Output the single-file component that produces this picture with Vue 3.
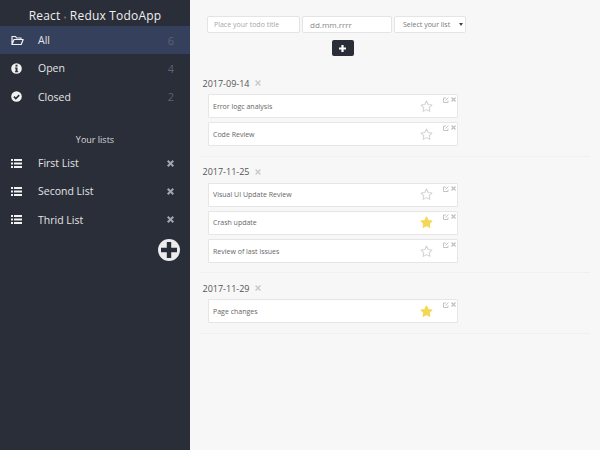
<template>
  <div class="app">
    <aside class="sidebar">
      <h1 class="brand">React <span class="heart">♦</span> Redux TodoApp</h1>
      <ul class="nav">
        <li v-for="item in filters" :key="item.name" :class="['nav-row', { active: item.active }]">
          <span class="nav-icon">
            <svg v-if="item.icon === 'folder'" width="13" height="11" viewBox="0 0 13 11" fill="none" stroke="currentColor" stroke-width="1.2"><path d="M1 9.5V1.5h3.5l1 1.5h4.5v1.5M1 9.5l2-5h9.2l-2 5z" stroke-linejoin="round" /></svg>
            <svg v-else-if="item.icon === 'info'" width="11" height="11" viewBox="0 0 11 11"><circle cx="5.5" cy="5.5" r="5.3" fill="currentColor" /><rect x="4.5" y="1.7" width="2" height="1.9" fill="#2a2e39" /><path d="M3.9 4.4h2.6v3.8h.8v1H3.9v-1h.7V5.4h-.7z" fill="#2a2e39" /></svg>
            <svg v-else width="11" height="11" viewBox="0 0 11 11"><circle cx="5.5" cy="5.5" r="5.3" fill="currentColor" /><path d="M2.9 5.6l1.9 1.9 3.4-3.4" fill="none" stroke="#2a2e39" stroke-width="1.6" /></svg>
          </span>
          <span class="nav-label">{{ item.name }}</span>
          <span class="nav-count">{{ item.count }}</span>
        </li>
      </ul>
      <h2 class="lists-title">Your lists</h2>
      <ul class="nav">
        <li v-for="list in lists" :key="list" class="nav-row">
          <span class="nav-icon">
            <svg width="11" height="9" viewBox="0 0 11 9" fill="currentColor"><rect y="0" width="2" height="2" /><rect y="3.5" width="2" height="2" /><rect y="7" width="2" height="2" /><rect x="3" y="0" width="8" height="2" /><rect x="3" y="3.5" width="8" height="2" /><rect x="3" y="7" width="8" height="2" /></svg>
          </span>
          <span class="nav-label">{{ list }}</span>
          <svg class="list-remove" width="7" height="7" viewBox="0 0 7 7" stroke="currentColor" stroke-width="2"><path d="M.7.7l5.6 5.6M6.3.7L.7 6.3" /></svg>
        </li>
      </ul>
      <div class="add-list">
        <button class="add-list-btn">
          <svg width="16" height="16" viewBox="0 0 16 16" fill="#2a2e39"><path d="M5.8 0h4.4v5.8H16v4.4h-5.8V16H5.8v-5.8H0V5.8h5.8z" /></svg>
        </button>
      </div>
    </aside>

    <main class="content">
      <form class="todo-form" @submit.prevent>
        <div class="form-fields">
          <div class="field title-field">Place your todo title</div>
          <div class="field date-field">dd.mm.rrrr</div>
          <div class="field list-field">Select your list <span class="caret"></span></div>
        </div>
        <button class="add-todo">
          <svg width="7" height="7" viewBox="0 0 7 7" fill="#fff"><path d="M2.4 0h2.2v2.4H7v2.2H4.6V7H2.4V4.6H0V2.4h2.4z" /></svg>
        </button>
      </form>

      <section v-for="group in groups" :key="group.date" class="group">
        <h3 class="group-date">{{ group.date }}
          <svg width="6" height="6" viewBox="0 0 7 7" stroke="#c8c8c8" stroke-width="1.6"><path d="M.7.7l5.6 5.6M6.3.7L.7 6.3" /></svg>
        </h3>
        <div v-for="todo in group.todos" :key="todo.title" class="todo">
          <span class="todo-title">{{ todo.title }}</span>
          <svg class="star" width="13" height="13" viewBox="0 0 24 24" :fill="todo.starred ? '#f5d757' : 'none'" :stroke="todo.starred ? '#f5d757' : '#d4d4d4'" stroke-width="2" stroke-linejoin="round"><polygon points="12 2 15.09 8.26 22 9.27 17 14.14 18.18 21.02 12 17.77 5.82 21.02 7 14.14 2 9.27 8.91 8.26" /></svg>
          <div class="todo-tools">
            <svg width="6" height="6" viewBox="0 0 6 6" fill="none" stroke="#c4c4c4"><path d="M5 3.5v2H.5V1H3M2.5 3.5l3-3" /></svg>
            <svg width="5" height="5" viewBox="0 0 7 7" stroke="#bdbdbd" stroke-width="1.6"><path d="M.7.7l5.6 5.6M6.3.7L.7 6.3" /></svg>
          </div>
        </div>
      </section>
    </main>
  </div>
</template>

<script setup>
const filters = [
  { name: 'All', count: 6, icon: 'folder', active: true },
  { name: 'Open', count: 4, icon: 'info' },
  { name: 'Closed', count: 2, icon: 'check' }
]

const lists = ['First List', 'Second List', 'Thrid List']

const groups = [
  {
    date: '2017-09-14',
    todos: [
      { title: 'Error logc analysis' },
      { title: 'Code Review' }
    ]
  },
  {
    date: '2017-11-25',
    todos: [
      { title: 'Visual UI Update Review' },
      { title: 'Crash update', starred: true },
      { title: 'Review of last issues' }
    ]
  },
  {
    date: '2017-11-29',
    todos: [{ title: 'Page changes', starred: true }]
  }
]
</script>

<style>
body {
  margin: 0;
}
</style>

<style scoped>
.app {
  display: flex;
  width: 600px;
  height: 450px;
  overflow: hidden;
  font-family: "Open Sans", "Liberation Sans", sans-serif;
  background: #f7f7f7;
}

.sidebar {
  width: 190px;
  flex-shrink: 0;
  background: #2a2e39;
  color: #e8e8e8;
}

.brand {
  margin: 0;
  height: 26px;
  line-height: 31px;
  font-size: 12px;
  font-weight: 400;
  text-align: center;
  color: #f0f0f0;
  letter-spacing: .2px;
}

.heart {
  font-size: 5px;
  color: #777;
  vertical-align: 1px;
}

.nav {
  list-style: none;
  margin: 0;
  padding: 0;
}

.nav-row {
  display: flex;
  align-items: center;
  height: 28.3px;
  padding: 0 16px 0 11px;
  font-size: 10.5px;
  color: #e4e4e4;
}

.nav-row.active {
  background: #34405c;
}

.nav-icon {
  display: flex;
  width: 27px;
  flex-shrink: 0;
  color: #f2f2f2;
}

.nav-label {
  flex: 1;
}

.nav-count {
  color: #5d6270;
  font-size: 11px;
}

.lists-title {
  margin: 21px 0 2px;
  height: 15px;
  line-height: 15px;
  font-size: 9px;
  font-weight: 400;
  text-align: center;
  color: #d8d8d8;
}

.list-remove {
  color: #a3a5ab;
}

.add-list {
  display: flex;
  justify-content: flex-end;
  padding: 5px 10px 0 0;
}

.add-list-btn {
  display: flex;
  align-items: center;
  justify-content: center;
  width: 22px;
  height: 22px;
  padding: 0;
  border: 0;
  border-radius: 50%;
  background: #ececec;
}

.content {
  flex: 1;
  padding: 16px 10px 0;
}

.todo-form {
  display: flex;
  flex-direction: column;
  align-items: center;
  width: 271px;
  margin: 0 0 20px 7px;
}

.form-fields {
  display: flex;
  gap: 2px;
  width: 100%;
}

.field {
  box-sizing: border-box;
  height: 17px;
  line-height: 15px;
  background: #fff;
  border: 1px solid #e4e4e4;
  border-radius: 2px;
  font-size: 7px;
  color: #a8a8a8;
  white-space: nowrap;
}

.title-field {
  width: 93px;
  padding-left: 6px;
}

.date-field {
  width: 90px;
  padding-left: 7px;
  font-size: 8px;
  color: #888;
}

.list-field {
  position: relative;
  width: 72px;
  padding-left: 8px;
  color: #777;
}

.caret {
  position: absolute;
  right: 2px;
  top: 6px;
  border-left: 2px solid transparent;
  border-right: 2px solid transparent;
  border-top: 3px solid #444;
}

.add-todo {
  display: flex;
  align-items: center;
  justify-content: center;
  width: 22px;
  height: 16px;
  margin-top: 7px;
  padding: 0;
  border: 0;
  border-radius: 2px;
  background: #2a2e39;
}

.group {
  padding-bottom: 5px;
  border-bottom: 1px solid #f0f0f0;
}

.group + .group {
  margin-top: 8px;
}

.group-date {
  display: flex;
  align-items: center;
  gap: 6px;
  height: 14px;
  margin: 0 0 4px 2.5px;
  font-size: 9px;
  font-weight: 400;
  color: #555;
}

.todo {
  position: relative;
  display: flex;
  align-items: center;
  justify-content: space-between;
  box-sizing: border-box;
  width: 250px;
  height: 24px;
  margin: 0 0 4.3px 8px;
  padding: 0 24px 0 4px;
  background: #fff;
  border: 1px solid #e6e6e6;
  border-radius: 1px;
  font-size: 7px;
  color: #666;
}

.todo-tools {
  position: absolute;
  top: 2px;
  right: 1px;
  display: flex;
  gap: 2px;
}
</style>
